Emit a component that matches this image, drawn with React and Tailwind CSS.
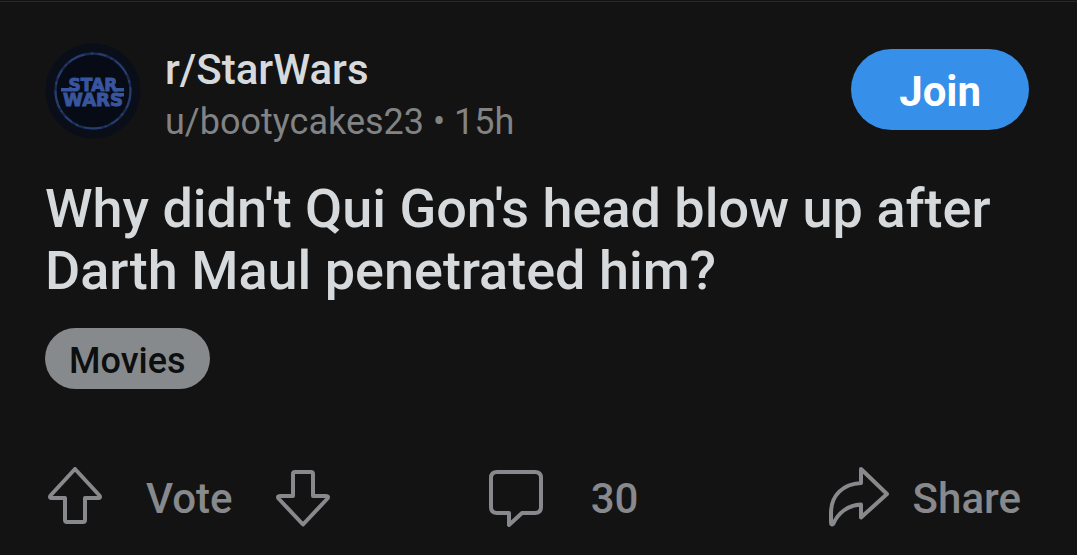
function SubredditLogo() {
  return (
    <svg
      viewBox="0 0 96 96"
      className="size-24 shrink-0"
      role="img"
      aria-label="r/StarWars community icon"
    >
      <circle cx="48" cy="48" r="47.5" fill="#090e19" />
      <circle cx="48" cy="48" r="37.5" fill="#070b15" stroke="#1a2a50" strokeWidth="2.5" />
      <circle
        cx="48"
        cy="48"
        r="37.5"
        fill="none"
        stroke="#34508f"
        strokeWidth="2"
        strokeDasharray="18 6 3 4 9 5 2 3"
        opacity="0.5"
      />
      <g
        fill="#38559f"
        stroke="#38559f"
        strokeWidth="1"
        fontFamily="'DejaVu Sans', sans-serif"
        fontWeight="700"
        textAnchor="middle"
      >
        <text x="48" y="48" fontSize="17">
          STAR
        </text>
        <text x="48" y="63" fontSize="18">
          WARS
        </text>
      </g>
      <path d="M16 45H27V48.5H16ZM69 45H79V48.5H69ZM72 50H79V53.5H72Z" fill="#38559f" />
    </svg>
  );
}

function OutlineIcon({ d, viewBox, className }) {
  return (
    <svg
      viewBox={viewBox}
      className={className}
      fill="none"
      stroke="currentColor"
      strokeWidth="4"
      strokeLinejoin="round"
      aria-hidden="true"
    >
      <path d={d} />
    </svg>
  );
}

const ICONS = {
  up: "M27 2 51.5 28.5Q53 31 50 31H37V53Q37 55 35 55H19Q17 55 17 53V31H4Q1 31 2.5 28.5Z",
  down: "M27 57.5 51.5 31.5Q53 29 50 29H37V7Q37 5 35 5H19Q17 5 17 7V29H4Q1 29 2.5 31.5Z",
  comment:
    "M8 5H46Q52 5 52 11V40Q52 46 46 46H33L20 58V46H8Q2 46 2 40V11Q2 5 8 5Z",
  share:
    "M32 2 58 27 32 50.5V37.5C19 38 9 46 4.5 56.5Q2 59 2 55V46C2 28 14 17 32 16Z",
};

function PostHeader() {
  return (
    <header className="flex items-start">
      <SubredditLogo />
      <div className="ml-6 flex flex-1 flex-col pt-[3px]">
        <a href="#subreddit" className="text-[42px] leading-12 font-medium text-[#d7dadc]">
          r/StarWars
        </a>
        <div className="mt-1 text-[36px] leading-12 text-[#818384]">
          <a href="#author">u/bootycakes23</a> • 15h
        </div>
      </div>
      <button
        type="button"
        className="mt-[6px] rounded-full bg-[#3690ea] px-12 pt-[19px] pb-[14px] text-[42px] leading-12 font-bold text-white"
      >
        Join
      </button>
    </header>
  );
}

function PostActions() {
  return (
    <footer className="flex items-center justify-between pr-2 pl-[3px] text-[42px] leading-15 font-medium text-[#87898c]">
      <div className="flex items-center">
        <button type="button" aria-label="Upvote">
          <OutlineIcon d={ICONS.up} viewBox="0 0 54 60" className="h-15 w-[54px]" />
        </button>
        <span className="mx-11 pt-1">Vote</span>
        <button type="button" aria-label="Downvote">
          <OutlineIcon d={ICONS.down} viewBox="0 0 54 60" className="h-15 w-[54px]" />
        </button>
      </div>
      <button type="button" className="flex items-center gap-12 pr-8" aria-label="30 comments">
        <OutlineIcon d={ICONS.comment} viewBox="0 0 54 60" className="h-15 w-[54px]" />
        <span className="pt-1">30</span>
      </button>
      <button type="button" className="flex items-center gap-6">
        <OutlineIcon d={ICONS.share} viewBox="0 0 60 60" className="size-15" />
        <span className="pt-1">Share</span>
      </button>
    </footer>
  );
}

function App() {
  return (
    <main className="min-h-screen bg-[#131313] pt-px font-['Roboto',sans-serif]">
      <article className="border-t border-[#292929] pt-[41px] pr-12 pb-6 pl-[45px]">
        <PostHeader />
        <h1 className="mt-8 text-[54px] leading-[62px] font-medium text-[#d7dadc]">
          Why didn't Qui Gon's head blow up after Darth Maul penetrated him?
        </h1>
        <a
          href="#flair"
          className="mt-[26px] block w-fit rounded-full bg-[#878a8c] px-6 pt-[11px] pb-[6px] text-[36px] leading-11 font-medium text-[#0d0e0f]"
        >
          Movies
        </a>
        <div className="mt-19">
          <PostActions />
        </div>
      </article>
    </main>
  );
}

export default App;
